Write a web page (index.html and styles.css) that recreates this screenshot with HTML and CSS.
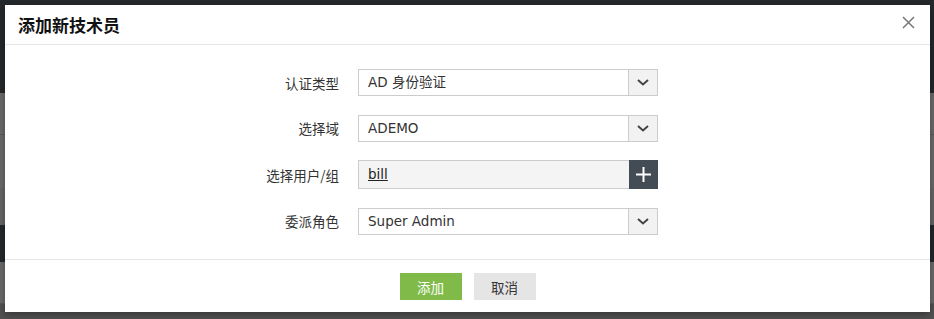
FILE: index.html
```html
<!DOCTYPE html>
<html lang="zh">
<head>
    <meta charset="UTF-8">
    <title>添加新技术员</title>
    <link rel="stylesheet" href="styles.css">
</head>
<body>
    <div class="page">
        <div class="band band-dark band-top"></div>
        <div class="band band-gray band-a"></div>
        <div class="band band-gray band-b"></div>
        <div class="band band-mid band-c"></div>
        <div class="band band-dark band-d"></div>
        <div class="band band-gray band-e"></div>
        <div class="band band-low"></div>
    </div>

    <div class="modal">
        <div class="modal-header">
            <h2 class="modal-title">添加新技术员</h2>
            <button class="close" aria-label="关闭">
                <svg width="13" height="13" viewBox="0 0 13 13"><path d="M1 1L12 12M12 1L1 12" stroke="#777" stroke-width="1.5" fill="none"/></svg>
            </button>
        </div>

        <div class="modal-body">
            <div class="form-grid">
                <label class="field-label">认证类型</label>
                <div class="select">
                    <span class="select-value">AD 身份验证</span>
                    <span class="select-arrow">
                        <svg width="12" height="7" viewBox="0 0 12 7"><path d="M1 1L6 5.5L11 1" stroke="#444" stroke-width="2" fill="none"/></svg>
                    </span>
                </div>

                <label class="field-label">选择域</label>
                <div class="select">
                    <span class="select-value">ADEMO</span>
                    <span class="select-arrow">
                        <svg width="12" height="7" viewBox="0 0 12 7"><path d="M1 1L6 5.5L11 1" stroke="#444" stroke-width="2" fill="none"/></svg>
                    </span>
                </div>

                <label class="field-label">选择用户/组</label>
                <div class="picker">
                    <a class="picker-value" href="#">bill</a>
                    <span class="picker-add">
                        <svg width="15" height="15" viewBox="0 0 15 15"><path d="M7.5 0V15M0 7.5H15" stroke="#fff" stroke-width="2" fill="none"/></svg>
                    </span>
                </div>

                <label class="field-label">委派角色</label>
                <div class="select">
                    <span class="select-value">Super Admin</span>
                    <span class="select-arrow">
                        <svg width="12" height="7" viewBox="0 0 12 7"><path d="M1 1L6 5.5L11 1" stroke="#444" stroke-width="2" fill="none"/></svg>
                    </span>
                </div>
            </div>
        </div>

        <div class="modal-footer">
            <button class="btn btn-primary">添加</button>
            <button class="btn btn-default">取消</button>
        </div>
    </div>
</body>
</html>
```

FILE: styles.css
```css
body {
    margin: 0;
    padding: 0;
    font-family: "DejaVu Sans", "Noto Sans CJK SC", sans-serif;
    color: #333;
    background-color: #4f4f4f;
    position: relative;
    height: 319px;
    overflow: hidden;
}

/* the dimmed page behind the dialog */
.page {
    display: flex;
    flex-direction: column;
}
.band-dark {
    background-color: #24282b;
}
.band-gray {
    background-color: #6b6b6b;
}
.band-mid {
    background-color: #666;
}
.band-top {
    height: 93px;
}
.band-a {
    height: 41px;
    border-bottom: 1px solid #5c5c5c;
}
.band-b {
    height: 53px;
}
.band-c {
    height: 37px;
}
.band-d {
    height: 37px;
}
.band-e {
    height: 41px;
    border-bottom: 1px solid #5c5c5c;
}
.band-low {
    height: 15px;
    background-color: #525252;
}

.modal {
    position: absolute;
    left: 5px;
    top: 5px;
    width: 925px;
    height: 307px;
    background-color: #fff;
    box-shadow: 0 3px 8px rgba(0, 0, 0, 0.35);
    display: flex;
    flex-direction: column;
}

.modal-header {
    height: 39px;
    border-bottom: 1px solid #e5e5e5;
    display: flex;
    align-items: center;
    justify-content: space-between;
    padding: 0 15px 0 13px;
}
.modal-title {
    margin: 0;
    font-family: "Noto Sans CJK SC", sans-serif;
    font-size: 17px;
    font-weight: bold;
    color: #111;
    line-height: 1;
}
.close {
    border: 0;
    background: none;
    padding: 0;
    margin-top: -5px;
    display: flex;
    cursor: pointer;
}

.modal-body {
    flex-grow: 1;
    padding-top: 24px;
}
.form-grid {
    display: grid;
    grid-template-columns: 334px 300px;
    column-gap: 19px;
    row-gap: 18.5px;
    align-items: center;
}
.field-label {
    text-align: right;
    font-family: "Noto Sans CJK SC", sans-serif;
    font-size: 13.5px;
    color: #333;
}

.select {
    display: flex;
    height: 27px;
    box-sizing: border-box;
    border: 1px solid #ccc;
    background-color: #fff;
}
.select-value {
    flex-grow: 1;
    padding-left: 9px;
    font-size: 13.5px;
    line-height: 25px;
    color: #333;
}
.select-arrow {
    width: 28px;
    border-left: 1px solid #ccc;
    background-color: #f2f2f2;
    display: flex;
    justify-content: center;
    align-items: center;
}

.picker {
    display: flex;
    height: 29px;
    box-sizing: border-box;
    border: 1px solid #ccc;
    border-right: 0;
    background-color: #f4f4f4;
}
.picker-value {
    flex-grow: 1;
    padding-left: 9px;
    font-size: 13.5px;
    line-height: 26px;
    color: #222;
    text-decoration: underline;
}
.picker-add {
    width: 29px;
    margin: -1px 0;
    background-color: #434c54;
    display: flex;
    justify-content: center;
    align-items: center;
}

.modal-footer {
    height: 52px;
    border-top: 1px solid #e5e5e5;
    display: flex;
    justify-content: center;
    align-items: center;
    gap: 12px;
}
.btn {
    width: 62px;
    height: 27px;
    border: 0;
    font-family: "Noto Sans CJK SC", sans-serif;
    font-size: 13.5px;
    cursor: pointer;
    margin-top: 1px;
}
.btn-primary {
    background-color: #80bb4a;
    color: #fff;
}
.btn-default {
    background-color: #e5e5e5;
    color: #333;
}
```
